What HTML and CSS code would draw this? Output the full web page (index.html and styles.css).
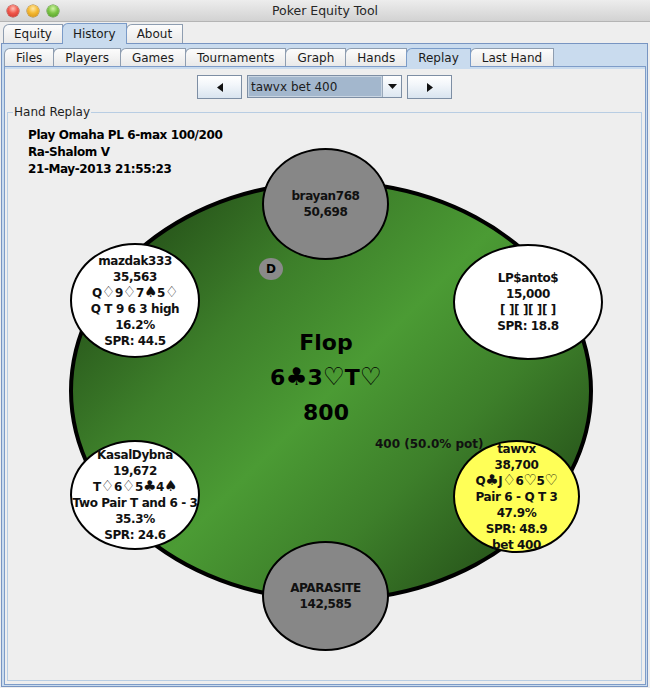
FILE: index.html
```html
<!DOCTYPE html>
<html>
<head>
<meta charset="utf-8">
<title>Poker Equity Tool</title>
<link rel="stylesheet" href="styles.css">
</head>
<body>
<div class="window">
  <div class="titlebar">
    <div class="lights">
      <span class="light red"></span>
      <span class="light yellow"></span>
      <span class="light green"></span>
    </div>
    <div class="title">Poker Equity Tool</div>
  </div>
  <div class="tabs outer-tabs">
    <div class="tab">Equity</div>
    <div class="tab selected">History</div>
    <div class="tab">About</div>
  </div>
  <div class="outer-panel">
    <div class="tabs inner-tabs">
      <div class="tab">Files</div>
      <div class="tab">Players</div>
      <div class="tab">Games</div>
      <div class="tab">Tournaments</div>
      <div class="tab">Graph</div>
      <div class="tab">Hands</div>
      <div class="tab selected">Replay</div>
      <div class="tab">Last Hand</div>
    </div>
    <div class="inner-panel">
      <div class="nav">
        <button class="navbtn"><svg width="8" height="11" viewBox="0 0 8 11"><path d="M7 1 L1 5.5 L7 10 Z" fill="#111"/></svg></button>
        <div class="combo">
          <span class="combo-text">tawvx bet 400</span>
          <span class="combo-arrow"><svg width="9" height="5" viewBox="0 0 9 5"><path d="M0 0 H9 L4.5 5 Z" fill="#111"/></svg></span>
        </div>
        <button class="navbtn"><svg width="8" height="11" viewBox="0 0 8 11"><path d="M1 1 L7 5.5 L1 10 Z" fill="#111"/></svg></button>
      </div>
      <div class="group">
        <span class="legend">Hand Replay</span>
        <div class="info">
          <div>Play Omaha PL 6-max 100/200</div>
          <div>Ra-Shalom V</div>
          <div>21-May-2013 21:55:23</div>
        </div>
        <div class="felt"></div>
        <div class="board">
          <div>Flop</div>
          <div>6<span class="suit">♣</span>3<span class="suit">♡</span>T<span class="suit">♡</span></div>
          <div>800</div>
        </div>
        <div class="pot">400 (50.0% pot)</div>
        <div class="dealer">D</div>
        <div class="seat empty s-top">
          <div>brayan768</div>
          <div>50,698</div>
        </div>
        <div class="seat open s-tl">
          <div>mazdak333</div>
          <div>35,563</div>
          <div>Q<span class="suit">♢</span>9<span class="suit">♢</span>7<span class="suit">♠</span>5<span class="suit">♢</span></div>
          <div>Q T 9 6 3 high</div>
          <div>16.2%</div>
          <div>SPR: 44.5</div>
        </div>
        <div class="seat open s-tr">
          <div>LP$anto$</div>
          <div>15,000</div>
          <div>[ ][ ][ ][ ]</div>
          <div>SPR: 18.8</div>
        </div>
        <div class="seat open s-bl">
          <div>KasalDybna</div>
          <div>19,672</div>
          <div>T<span class="suit">♢</span>6<span class="suit">♢</span>5<span class="suit">♣</span>4<span class="suit">♠</span></div>
          <div>Two Pair T and 6 - 3</div>
          <div>35.3%</div>
          <div>SPR: 24.6</div>
        </div>
        <div class="seat active s-br">
          <div>tawvx</div>
          <div>38,700</div>
          <div>Q<span class="suit">♣</span>J<span class="suit">♢</span>6<span class="suit">♡</span>5<span class="suit">♡</span></div>
          <div>Pair 6 - Q T 3</div>
          <div>47.9%</div>
          <div>SPR: 48.9</div>
          <div>bet 400</div>
        </div>
        <div class="seat empty s-bottom">
          <div>APARASITE</div>
          <div>142,585</div>
        </div>
      </div>
    </div>
  </div>
</div>
</body>
</html>
```
FILE: styles.css
```css
* { box-sizing: border-box; }
html, body { margin: 0; padding: 0; }
body {
  width: 650px;
  height: 688px;
  overflow: hidden;
  background: #eeeeee;
  font-family: "DejaVu Sans", "Noto Sans", sans-serif;
  font-size: 12px;
  color: #000;
}
.window {
  width: 650px;
  height: 688px;
  display: flex;
  flex-direction: column;
  background: #eeeeee;
}
.titlebar {
  flex: none;
  height: 22px;
  position: relative;
  display: flex;
  align-items: center;
  justify-content: center;
  background: linear-gradient(#ededed, #d2d2d2);
  border-bottom: 1px solid #b4b4b4;
}
.lights {
  position: absolute;
  left: 7px;
  top: 5px;
  display: flex;
  gap: 8px;
}
.light {
  width: 12px;
  height: 12px;
  border-radius: 50%;
}
.red { background: radial-gradient(circle at 50% 30%, #ffc2b8 0%, #f0584c 45%, #c8302a 100%); box-shadow: 0 0 0 0.5px #a43a33; }
.yellow { background: radial-gradient(circle at 50% 30%, #ffe9a8 0%, #f4b933 45%, #d08b10 100%); box-shadow: 0 0 0 0.5px #a9791e; }
.green { background: radial-gradient(circle at 50% 30%, #d2f5a8 0%, #7cc445 45%, #4c9624 100%); box-shadow: 0 0 0 0.5px #4f8a2c; }
.title {
  font-size: 12.5px;
  color: #262626;
}
.tabs {
  display: flex;
  align-items: flex-end;
  flex: none;
}
.outer-tabs {
  height: 21px;
  padding-left: 3px;
}
.inner-tabs {
  height: 19px;
}
.tab {
  height: 19px;
  display: flex;
  align-items: center;
  padding: 0 10px;
  border: 1px solid #8e9db0;
  border-bottom: none;
  border-radius: 6px 0 0 0;
  background: linear-gradient(#fcfcfc, #e9e9e9);
  margin-right: -1px;
  color: #1b1b1b;
}
.inner-tabs .tab { height: 18px; padding: 0 11px; }
.tab.selected {
  background: #c9dbee;
  border-color: #7a9bc8;
  position: relative;
  z-index: 1;
  margin-bottom: -1px;
}
.outer-tabs .tab.selected { height: 21px; }
.inner-tabs .tab.selected { height: 19px; }
.outer-panel {
  flex: 1;
  display: flex;
  flex-direction: column;
  margin: 0 2px 1px 1px;
  border: 1px solid #7895c2;
  background: #c9dbee;
  padding: 3px 1px 1px 2px;
}
.inner-panel {
  flex: 1;
  display: flex;
  flex-direction: column;
  border: 1px solid #7e9cc8;
  box-shadow: inset 0 2px 0 #c9dbee;
  background: #eeeeee;
  padding: 8px 2px 3px 1px;
}
.nav {
  flex: none;
  height: 24px;
  display: flex;
  justify-content: center;
  gap: 5px;
  margin-bottom: 13px;
}
.navbtn {
  width: 45px;
  height: 24px;
  padding: 0;
  margin: 0;
  border: 1px solid #7d8ea4;
  background: linear-gradient(#ffffff 0%, #f2f6fa 40%, #d9e4ef 100%);
  display: flex;
  align-items: center;
  justify-content: center;
}
.combo {
  width: 155px;
  height: 23px;
  display: flex;
  border: 1px solid #7d8ea4;
  background: #ffffff;
}
.combo-text {
  flex: 1;
  display: flex;
  align-items: center;
  padding-left: 2px;
  background: #a3b7cd;
  border: 1px solid #c9d5e2;
  color: #1c1c1c;
}
.combo-arrow {
  width: 19px;
  display: flex;
  align-items: center;
  justify-content: center;
  border-left: 1px solid #9aa9bb;
  background: linear-gradient(#ffffff, #dde7f1);
}
.group {
  flex: 1;
  position: relative;
  border: 1px solid #b8cde3;
  margin: 0 1px 0 1px;
}
.legend {
  position: absolute;
  left: 5px;
  top: -9px;
  padding: 0 1px;
  line-height: 16px;
  background: #eeeeee;
  color: #1e1e1e;
}
.info {
  padding: 14px 0 0 20px;
  font-weight: bold;
  line-height: 17px;
  letter-spacing: -0.4px;
}
.felt {
  position: absolute;
  left: 61px;
  top: 67px;
  width: 524px;
  height: 422px;
  border: 4px solid #000;
  border-radius: 50%;
  background: linear-gradient(135deg, #224c16 0%, #2b5c1d 16%, #3d7f2a 32%, #4b9b34 50%, #3d7f2a 68%, #2b5c1d 84%, #224c16 100%);
}
.suit {
  font-size: 1.25em;
  line-height: 0;
  font-weight: normal;
}
.board {
  position: absolute;
  left: 218px;
  top: 212px;
  width: 200px;
  text-align: center;
  font-size: 22px;
  font-weight: bold;
  line-height: 35px;
  color: #000;
}
.board .suit { font-size: 1.12em; }
.pot {
  position: absolute;
  left: 367px;
  top: 323px;
  font-weight: bold;
  line-height: 16px;
  color: #111;
}
.dealer {
  position: absolute;
  left: 251px;
  top: 145px;
  width: 24px;
  height: 22px;
  border-radius: 50%;
  background: #8a8a8a;
  display: flex;
  align-items: center;
  justify-content: center;
  font-weight: bold;
  font-size: 12px;
}
.seat {
  position: absolute;
  border: 2px solid #000;
  border-radius: 50%;
  display: flex;
  flex-direction: column;
  align-items: center;
  justify-content: center;
  font-weight: bold;
  line-height: 16px;
  white-space: nowrap;
  letter-spacing: -0.4px;
  color: #111;
}
.seat.empty { background: #878787; }
.seat.open { background: #ffffff; }
.seat.active { background: #ffff57; }
.s-top { left: 254px; top: 35px; width: 127px; height: 112px; }
.s-bottom { left: 254px; top: 428px; width: 127px; height: 110px; }
.s-tl { left: 62px; top: 130px; width: 130px; height: 115px; }
.s-bl { left: 62px; top: 327px; width: 130px; height: 110px; }
.s-tr { left: 445px; top: 131px; width: 150px; height: 116px; }
.s-br { left: 445px; top: 327px; width: 127px; height: 113px; }
```
